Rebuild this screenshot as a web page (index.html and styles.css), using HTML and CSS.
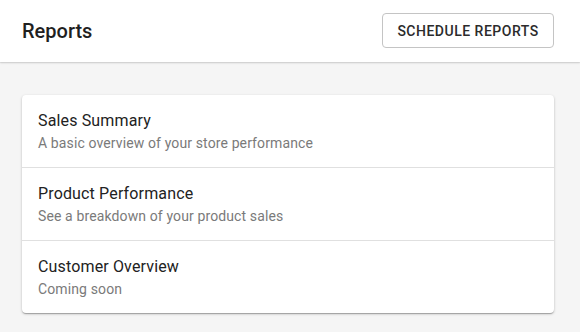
FILE: index.html
```html
<!DOCTYPE html>
<html>
<head>
<meta charset="utf-8">
<link rel="stylesheet" href="styles.css">
</head>
<body>
<header class="topbar">
  <h1 class="title">Reports</h1>
  <button class="btn-outline">SCHEDULE REPORTS</button>
</header>
<main class="content">
  <section class="card">
    <div class="row">
      <div class="row-title">Sales Summary</div>
      <div class="row-sub">A basic overview of your store performance</div>
    </div>
    <div class="row">
      <div class="row-title">Product Performance</div>
      <div class="row-sub">See a breakdown of your product sales</div>
    </div>
    <div class="row">
      <div class="row-title">Customer Overview</div>
      <div class="row-sub">Coming soon</div>
    </div>
  </section>
</main>
</body>
</html>
```
FILE: styles.css
```css
* { box-sizing: border-box; }
html, body { margin: 0; padding: 0; }
body {
  background: #f5f5f5;
  font-family: Roboto, "Liberation Sans", sans-serif;
  color: #212121;
  width: 580px;
  height: 332px;
  overflow: hidden;
}
.topbar {
  height: 62px;
  background: #fff;
  display: flex;
  align-items: center;
  justify-content: space-between;
  padding: 0 26px 0 22px;
  box-shadow: 0 1px 2px rgba(0,0,0,0.12), 0 1px 1px rgba(0,0,0,0.06);
  position: relative;
}
.title {
  margin: 0;
  font-size: 20px;
  font-weight: 500;
  color: #1f1f1f;
  line-height: 24px;
}
.btn-outline {
  height: 35px;
  width: 172px;
  padding: 0;
  margin-top: -1px;
  background: #fff;
  border: 1px solid #c4c4c4;
  border-radius: 4px;
  font-family: Roboto, "Liberation Sans", sans-serif;
  font-size: 14px;
  font-weight: 500;
  letter-spacing: 0.5px;
  color: #2b2b2b;
}
.content {
  padding: 33px 26px 0 22px;
}
.card {
  background: #fff;
  border-radius: 4px;
  box-shadow: 0 1px 3px rgba(0,0,0,0.2), 0 1px 1px rgba(0,0,0,0.14), 0 2px 1px -1px rgba(0,0,0,0.12);
}
.row {
  padding: 14px 16px;
  border-bottom: 1px solid #e0e0e0;
}
.row:last-child { border-bottom: none; }
.row-title {
  font-size: 16px;
  line-height: 24px;
  letter-spacing: 0.15px;
  color: #222;
}
.row-sub {
  font-size: 14px;
  line-height: 20px;
  letter-spacing: 0.12px;
  color: #7a7a7a;
}
```
